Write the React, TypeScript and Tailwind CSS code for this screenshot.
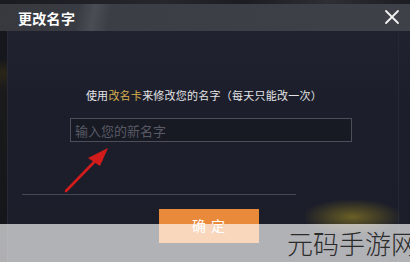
import React from "react";

export default function App() {
  const cjk = { fontFamily: '"Noto Sans CJK SC", "Noto Sans", sans-serif' };
  return (
    <div
      className="relative w-[410px] h-[262px] overflow-hidden bg-[#1c1e29] flex flex-col"
      style={cjk}
    >
      {/* top strip */}
      <div className="h-[4px] bg-[linear-gradient(90deg,#1a1b20_0%,#26272d_40%,#1c1d22_60%,#2e2f35_80%,#1c1d22_100%)]" />
      {/* header */}
      <div className="h-[27px] flex items-center justify-between pl-[18px] pr-[10px] bg-[linear-gradient(100deg,#37393f_0%,#393b42_19%,#4b4d55_23%,#3c3e46_27%,#3d3f47_60%,#3f4149_100%)]">
        <span className="text-[14px] font-bold text-white leading-none tracking-[0.3px]">
          更改名字
        </span>
        <svg width="16" height="16" viewBox="0 0 16 16" className="mb-[1px]">
          <path d="M2 2 L14 14 M14 2 L2 14" stroke="#f2f2f2" strokeWidth="1.8" strokeLinecap="round" />
        </svg>
      </div>
      {/* body */}
      <div className="flex-1 flex flex-row bg-[linear-gradient(180deg,#202230_0%,#1c1e2b_30%,#1b1d29_100%)]">
        <div className="w-[8px] bg-[linear-gradient(180deg,#16171c_0%,#16171c_12%,#2a2518_18%,#1a1a1c_26%,#141519_100%)] border-r border-[#262836]" />
        <div className="flex-1 flex flex-col items-center border-r border-[#252735] mr-[11px]">
          <div className="mt-[56px] h-[16px] flex items-center text-[11px] tracking-[0.25px] text-[#e4e4e6] leading-none ml-[2px]">
            <span>使用</span>
            <span className="text-[#d6b04c]">改名卡</span>
            <span>来修改您的名字（每天只能改一次）</span>
          </div>
          <div className="mt-[15px] w-[282px] h-[24px] border border-[#4c4f5a] bg-[#171923] flex items-center pl-[4px] ml-[16px]">
            <span className="text-[13px] text-[#575a65] leading-none">输入您的新名字</span>
          </div>
          <div className="mt-[52px] self-start ml-[14px] w-[274px] h-[1px] bg-[#454854]" />
          <div className="mt-[14px] w-[100px] h-[34px] bg-[#e98a3b] flex items-start justify-center pt-[9px] ml-[11px]">
            <span className="text-[14px] text-white leading-none tracking-[5px] pl-[5px]">确定</span>
          </div>
        </div>
      </div>

      {/* red arrow annotation */}
      <svg className="absolute left-0 top-0" width="410" height="262" viewBox="0 0 410 262">
        <line x1="66" y1="191" x2="100" y2="156" stroke="#d21c1c" strokeWidth="2.6" strokeLinecap="round" />
        <polygon points="108,148 88,158 100,166" fill="#d21c1c" />
      </svg>

      {/* yellow glow */}
      <div className="absolute left-[305px] top-[200px] w-[95px] h-[34px] rounded-full bg-[radial-gradient(ellipse_at_center,rgba(170,150,35,0.55)_0%,rgba(130,115,30,0.3)_45%,rgba(0,0,0,0)_75%)]" />

      {/* watermark band */}
      <div className="absolute left-0 right-0 top-[224px] bottom-0 bg-white/[0.66]" />
      <div className="absolute left-[287px] top-[226px] whitespace-nowrap text-[26px] font-light leading-[34px] text-[#2b2b2b]">
        元码手游网
      </div>
    </div>
  );
}
